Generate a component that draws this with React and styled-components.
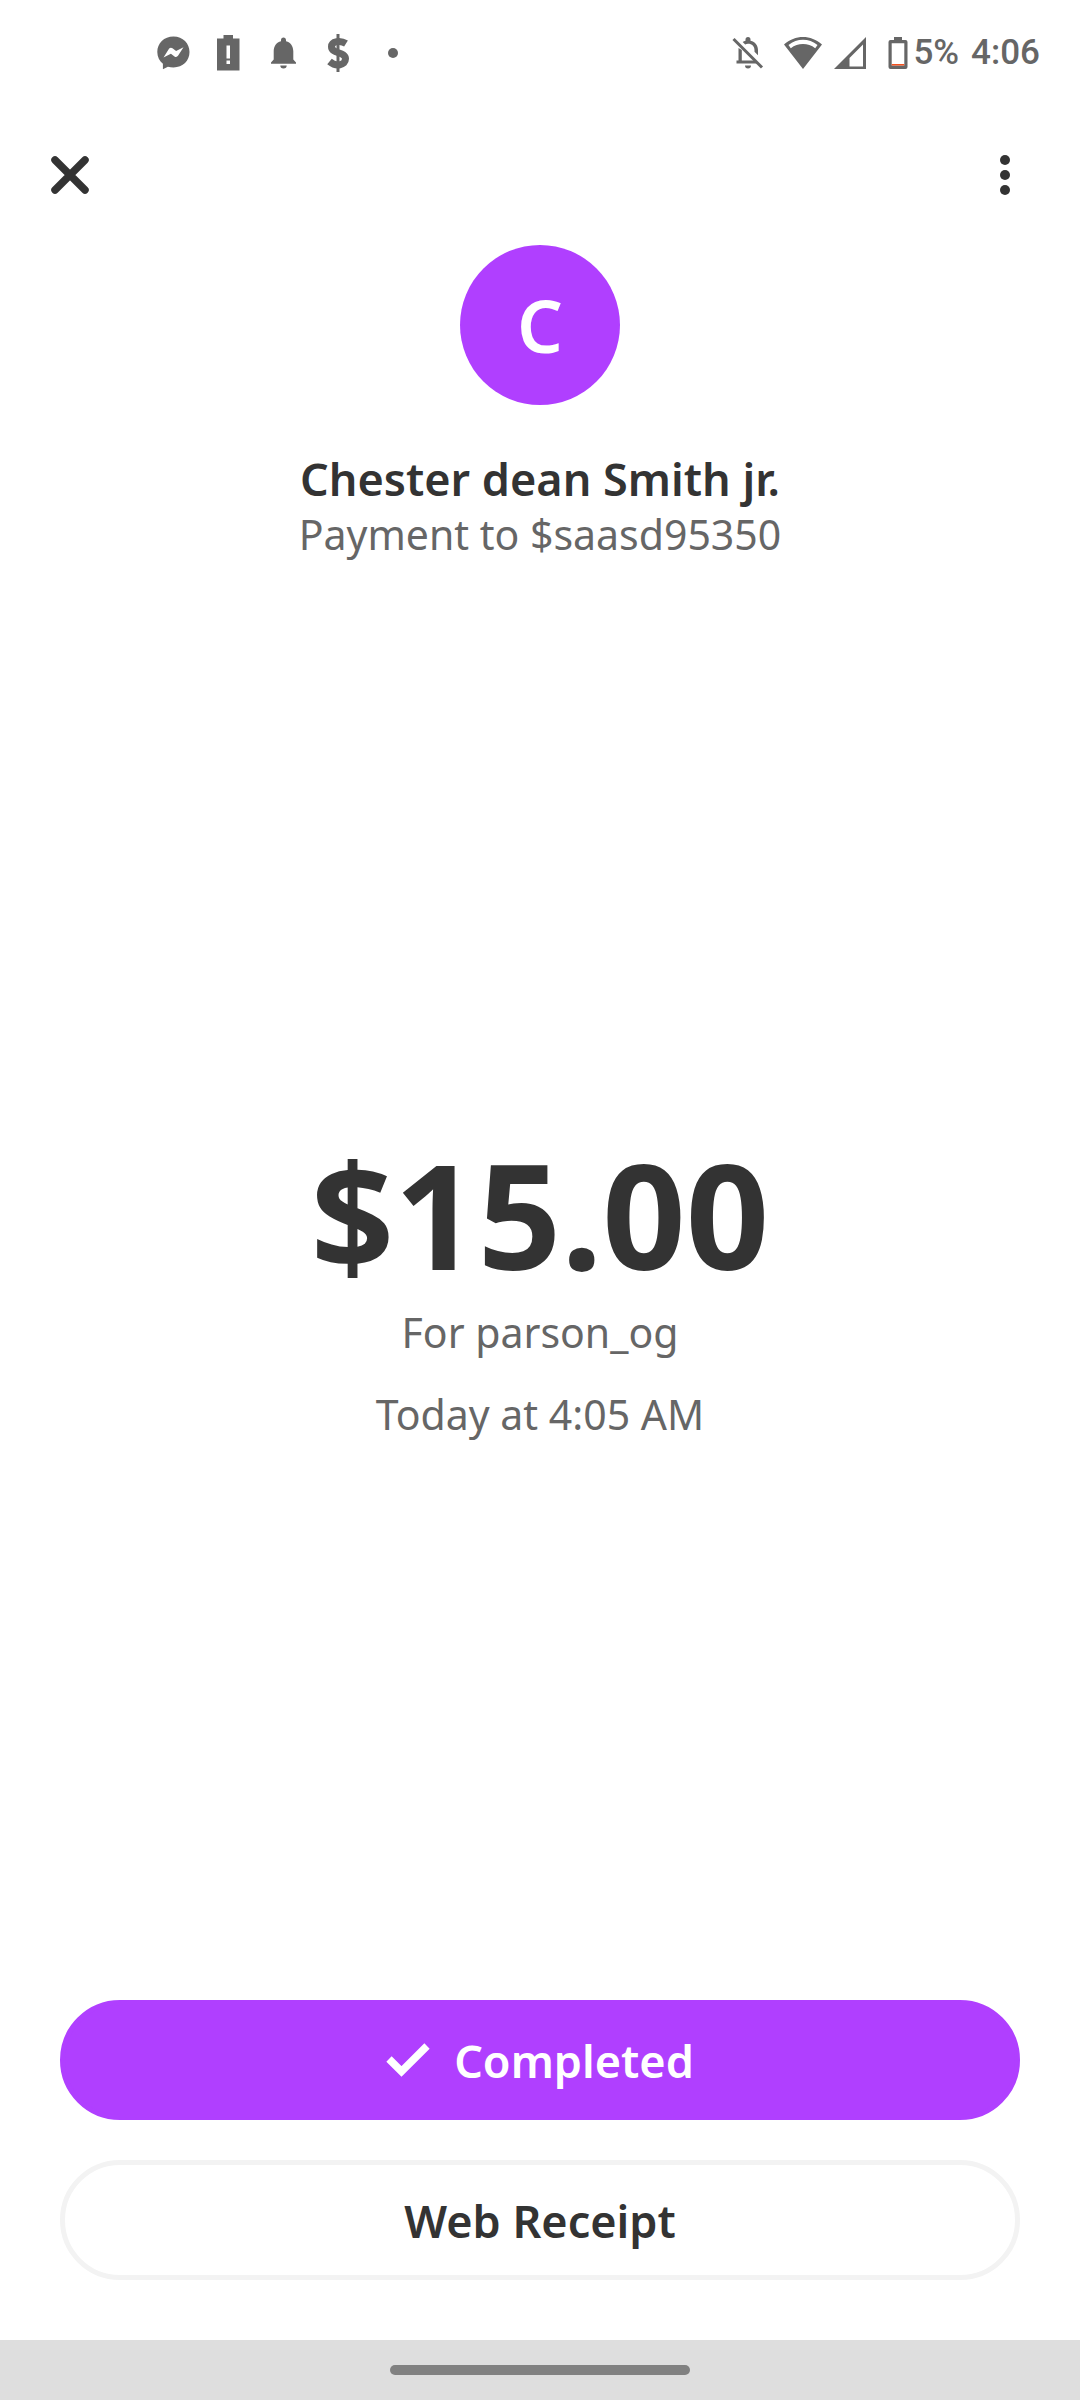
import React from "react";
import styled, { createGlobalStyle } from "styled-components";

const GlobalStyle = createGlobalStyle`
  * {
    box-sizing: border-box;
  }

  body {
    margin: 0;
    background: #ffffff;
    color: #333333;
    font-family: "Noto Sans", "Open Sans", sans-serif;
  }
`;

const Screen = styled.div`
  display: flex;
  flex-direction: column;
  min-height: 100vh;
`;

const StatusBar = styled.div`
  display: flex;
  align-items: center;
  justify-content: space-between;
  height: 105px;
  padding: 0 40px 0 156px;
  color: #666666;

  svg {
    display: block;
    fill: currentColor;
  }
`;

const StatusGroup = styled.div`
  display: flex;
  align-items: center;
  gap: ${(props) => props.$gap}px;
`;

const StatusText = styled.span`
  font-family: Roboto, sans-serif;
  font-size: 35px;
  font-weight: 500;
  line-height: 40px;
`;

const Battery = styled.span`
  display: flex;
  align-items: center;
  gap: 5px;
`;

const Toolbar = styled.header`
  display: flex;
  align-items: center;
  justify-content: space-between;
  height: 140px;
  padding: 0 35px 0 30px;
`;

const IconButton = styled.button`
  display: flex;
  align-items: center;
  justify-content: center;
  width: 80px;
  height: 80px;
  padding: 0;
  border: 0;
  background: none;
  color: #333333;
`;

const Recipient = styled.section`
  display: flex;
  flex-direction: column;
  align-items: center;
  text-align: center;
`;

const Avatar = styled.div`
  display: flex;
  align-items: center;
  justify-content: center;
  width: 160px;
  height: 160px;
  margin-bottom: 44px;
  border-radius: 50%;
  background: #b03fff;
  color: #ffffff;
  font-size: 72px;
  font-weight: 600;
`;

const Name = styled.h1`
  margin: 0;
  font-size: 45px;
  font-weight: 600;
  line-height: 60px;
`;

const Detail = styled.p`
  margin: 0;
  color: #666666;
  font-size: 41px;
  line-height: 50px;
`;

const Payment = styled.section`
  display: flex;
  flex: 1;
  flex-direction: column;
  align-items: center;
  justify-content: center;
  text-align: center;
`;

const Amount = styled.p`
  margin: 0;
  font-size: 146px;
  font-weight: 700;
  line-height: 186px;
`;

const Details = styled.div`
  display: flex;
  flex-direction: column;
  gap: 32px;
`;

const Actions = styled.div`
  display: flex;
  flex-direction: column;
  gap: 40px;
  padding: 0 60px 60px;
`;

const Button = styled.button`
  display: flex;
  align-items: center;
  justify-content: center;
  gap: 24px;
  height: 120px;
  border: 5px solid ${(props) => (props.$primary ? "#b03fff" : "#f3f3f3")};
  border-radius: 60px;
  background: ${(props) => (props.$primary ? "#b03fff" : "#ffffff")};
  color: ${(props) => (props.$primary ? "#ffffff" : "#333333")};
  font-family: inherit;
  font-size: 45px;
  font-weight: 600;
`;

const NavBar = styled.div`
  display: flex;
  align-items: center;
  justify-content: center;
  height: 60px;
  background: #dedede;
`;

const NavHandle = styled.div`
  width: 300px;
  height: 10px;
  border-radius: 5px;
  background: #818181;
`;

const MessengerIcon = () => (
  <svg width="35" height="38" viewBox="0 0 35 38">
    <path d="M17.5 2.5C8 2.5 1.3 9.3 1.3 18c0 5 2.2 9 5.6 11.8V35.2l5-2.5c1.8.5 3.6.7 5.6.7 9.5 0 16-6.800 16-15.400S27 2.500 17.500 2.500z" />
    <path
      d="M7.500 23.500l5.500-8.700c.9-1.300 2.300-1.500 3.500-.6l3.600 2.700 7.400-3.600-5.500 8.500c-.9 1.300-2.300 1.500-3.500.6l-3.600-2.700z"
      fill="#ffffff"
    />
  </svg>
);

const BatteryAlertIcon = () => (
  <svg width="35" height="38" viewBox="0 0 35 38">
    <path d="M12.500 1h9.500v3.500h6.500V36.500H6V4.500h6.500z" />
    <path d="M15.500 11.500h3.500v13h-3.500zM15.500 26.500h3.500v3.500h-3.500z" fill="#ffffff" />
  </svg>
);

const BellIcon = () => (
  <svg width="35" height="38" viewBox="0 0 35 38">
    <path d="M17.500 3.500c1.500 0 2.500 1 2.500 2.700v1c4.600 1.200 7.300 5 7.300 10v8.300l2.700 3v1.200H5v-1.200l2.700-3v-8.300c0-5 2.700-8.800 7.300-10v-1c0-1.700 1-2.700 2.500-2.700zM14.300 31.500h6.400a3.200 3 0 0 1-6.400 0z" />
  </svg>
);

const CashIcon = () => (
  <svg width="35" height="38" viewBox="0 0 35 38">
    <path
      d="M25 9.500C19.500 6 10.500 7 10.500 12.800c0 7.200 14 4.700 14 12 0 6.700-9.500 8.200-16 2.700"
      fill="none"
      stroke="currentColor"
      strokeWidth="7"
    />
    <path d="M15.500 0h3v38h-3z" />
  </svg>
);

const DotIcon = () => (
  <svg width="35" height="38" viewBox="0 0 35 38">
    <circle cx="17" cy="19" r="5" />
  </svg>
);

const BellOffIcon = () => (
  <svg width="40" height="34" viewBox="0 0 40 34">
    <path d="M13.500 4.800V3.500a2.500 2.500 0 0 1 5 0v1.300c5 1.200 7.500 5 7.500 9.500v5l-3.500-3.500v-1.500c0-4-2.500-6.500-6.500-6.500-1 0-2 .2-2.800.6L10.700 6c.9-.6 1.800-1 2.800-1.200zM6.500 12l3.300 2v10.500h13l3.200 3H4.500v-3h2zM13 29.500h6a3 3 0 0 1-6 0z" />
    <path d="M1.500 3L30 31.500" stroke="currentColor" strokeWidth="3" />
  </svg>
);

const WifiIcon = () => (
  <svg width="38" height="34" viewBox="0 0 38 34">
    <path
      d="M0 8.500C11-1.500 27-1.500 38 8.500L19 33zM4.500 9l2.300 3.200c7.200-5.600 17.200-5.600 24.400 0L33.500 9C25 2 13 2 4.500 9z"
      fillRule="evenodd"
    />
  </svg>
);

const SignalIcon = () => (
  <svg width="42" height="34" viewBox="0 0 42 34">
    <path d="M32 1v32H0zM29 8.500L15.500 22v8.500H29z" fillRule="evenodd" />
  </svg>
);

const BatteryLowIcon = () => (
  <svg width="20" height="34" viewBox="0 0 20 34">
    <path
      d="M6 1h8v3h3.500a2 2 0 0 1 2 2v25a2 2 0 0 1-2 2h-15a2 2 0 0 1-2-2V6a2 2 0 0 1 2-2H6zM3.700 7.200v22.300h12.600V7.200z"
      fillRule="evenodd"
    />
    <path d="M3.700 28h12.600v1.500H3.700z" fill="#f4511e" />
  </svg>
);

const CloseIcon = () => (
  <svg width="40" height="40" viewBox="0 0 40 40">
    <path d="M5 5l30 30M35 5L5 35" stroke="currentColor" strokeWidth="7.500" strokeLinecap="round" />
  </svg>
);

const MoreIcon = () => (
  <svg width="10" height="40" viewBox="0 0 10 40" fill="currentColor">
    <circle cx="5" cy="5" r="5" />
    <circle cx="5" cy="20" r="5" />
    <circle cx="5" cy="35" r="5" />
  </svg>
);

const CheckIcon = () => (
  <svg width="44" height="36" viewBox="0 0 44 36">
    <path d="M3 17L15.500 29.500 41 4" fill="none" stroke="currentColor" strokeWidth="7.500" />
  </svg>
);

const App = () => {
  return (
    <Screen>
      <GlobalStyle />
      <StatusBar>
        <StatusGroup $gap={20}>
          <MessengerIcon />
          <BatteryAlertIcon />
          <BellIcon />
          <CashIcon />
          <DotIcon />
        </StatusGroup>
        <StatusGroup $gap={12}>
          <BellOffIcon />
          <WifiIcon />
          <SignalIcon />
          <Battery>
            <BatteryLowIcon />
            <StatusText>5%</StatusText>
          </Battery>
          <StatusText>4:06</StatusText>
        </StatusGroup>
      </StatusBar>
      <Toolbar>
        <IconButton aria-label="Close">
          <CloseIcon />
        </IconButton>
        <IconButton aria-label="More options">
          <MoreIcon />
        </IconButton>
      </Toolbar>
      <Recipient>
        <Avatar>C</Avatar>
        <Name>Chester dean Smith jr.</Name>
        <Detail>Payment to $saasd95350</Detail>
      </Recipient>
      <Payment>
        <Amount>$15.00</Amount>
        <Details>
          <Detail>For parson_og</Detail>
          <Detail>Today at 4:05 AM</Detail>
        </Details>
      </Payment>
      <Actions>
        <Button $primary>
          <CheckIcon />
          Completed
        </Button>
        <Button>Web Receipt</Button>
      </Actions>
      <NavBar>
        <NavHandle />
      </NavBar>
    </Screen>
  );
};

export default App;
